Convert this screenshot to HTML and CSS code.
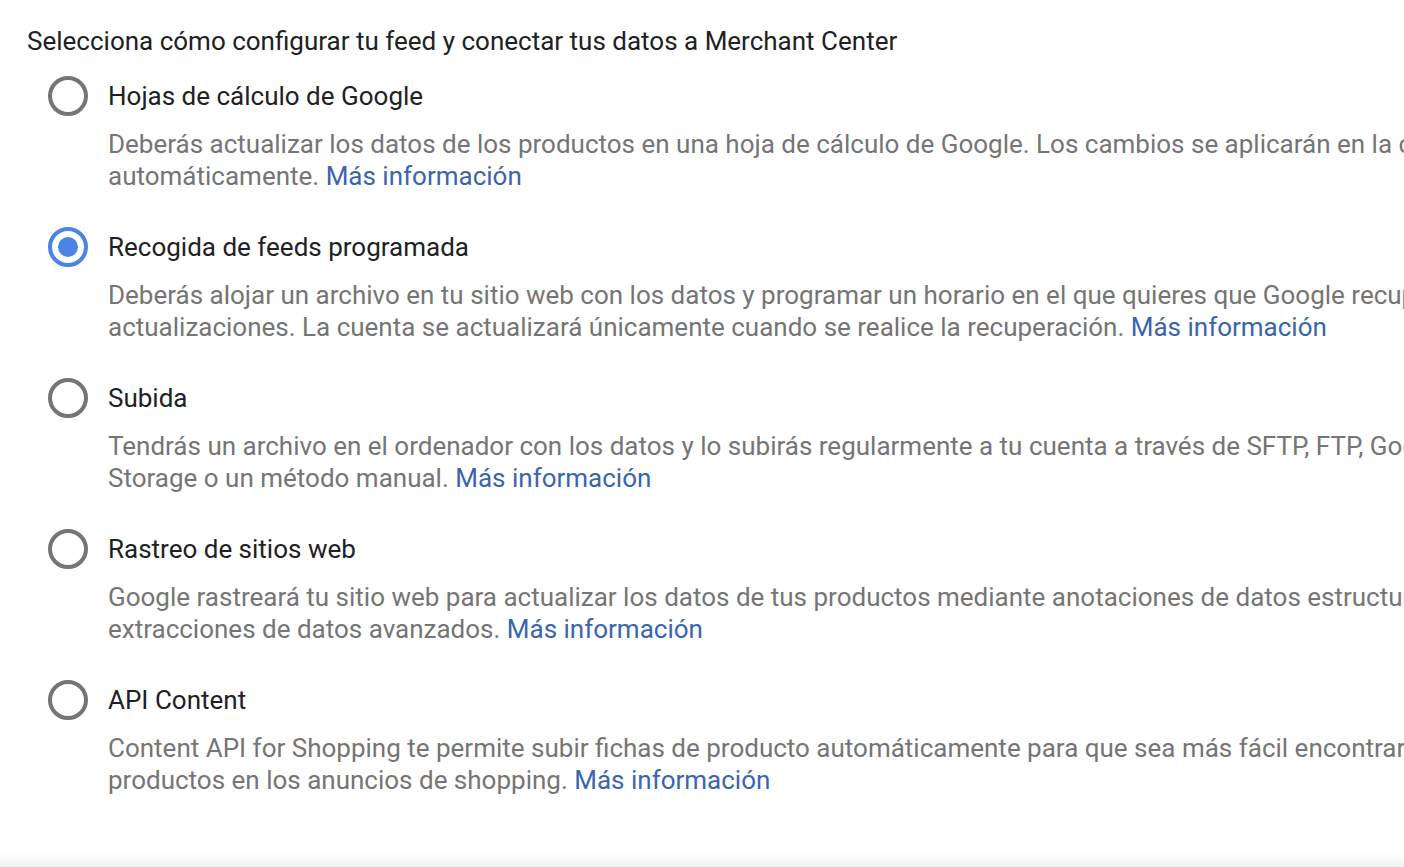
FILE: index.html
```html
<!DOCTYPE html>
<html lang="es">
<head>
<meta charset="utf-8">
<title>Merchant Center</title>
<link rel="stylesheet" href="styles.css">
</head>
<body>
<div class="page">
  <main class="content">
    <h1 class="title">Selecciona cómo configurar tu feed y conectar tus datos a Merchant Center</h1>
    <div class="options">
      <div class="option">
        <span class="radio"></span>
        <div class="label">Hojas de cálculo de Google</div>
        <p class="desc">Deberás actualizar los datos de los productos en una hoja de cálculo de Google. Los cambios se aplicarán en la cuenta<br>automáticamente. <a href="#" class="link">Más información</a></p>
      </div>
      <div class="option">
        <span class="radio checked"></span>
        <div class="label">Recogida de feeds programada</div>
        <p class="desc">Deberás alojar un archivo en tu sitio web con los datos y programar un horario en el que quieres que Google recupere las<br>actualizaciones. La cuenta se actualizará únicamente cuando se realice la recuperación. <a href="#" class="link">Más información</a></p>
      </div>
      <div class="option">
        <span class="radio"></span>
        <div class="label">Subida</div>
        <p class="desc">Tendrás un archivo en el ordenador con los datos y lo subirás regularmente a tu cuenta a través de SFTP, FTP, Google Cloud<br>Storage o un método manual. <a href="#" class="link">Más información</a></p>
      </div>
      <div class="option">
        <span class="radio"></span>
        <div class="label">Rastreo de sitios web</div>
        <p class="desc">Google rastreará tu sitio web para actualizar los datos de tus productos mediante anotaciones de datos estructurados y<br>extracciones de datos avanzados. <a href="#" class="link">Más información</a></p>
      </div>
      <div class="option">
        <span class="radio"></span>
        <div class="label">API Content</div>
        <p class="desc">Content API for Shopping te permite subir fichas de producto automáticamente para que sea más fácil encontrar tus<br>productos en los anuncios de shopping. <a href="#" class="link">Más información</a></p>
      </div>
    </div>
  </main>
  <footer class="footer"></footer>
</div>
</body>
</html>
```
FILE: styles.css
```css
html, body {
  margin: 0;
  padding: 0;
  background: #ffffff;
  overflow: hidden;
}
body {
  font-family: Roboto, "Liberation Sans", Arial, sans-serif;
  font-size: 26px;
  color: #202124;
}
.page {
  width: 1404px;
  height: 867px;
  display: flex;
  flex-direction: column;
  overflow: hidden;
}
.content {
  flex: 1;
  padding: 25px 0 0 27px;
  overflow: hidden;
}
.title {
  margin: 0;
  font-size: 26px;
  font-weight: 400;
  line-height: 32px;
  white-space: nowrap;
  color: #202124;
}
.options {
  margin-top: 19px;
  padding-left: 21px;
  display: flex;
  flex-direction: column;
  gap: 35px;
}
.option {
  display: grid;
  grid-template-columns: 40px auto;
  column-gap: 20px;
  align-items: center;
}
.radio {
  box-sizing: border-box;
  width: 40px;
  height: 40px;
  border: 4px solid #757575;
  border-radius: 50%;
  display: flex;
  align-items: center;
  justify-content: center;
}
.radio.checked {
  border-color: #4a84e4;
}
.radio.checked::after {
  content: "";
  width: 20px;
  height: 20px;
  border-radius: 50%;
  background: #4a84e4;
}
.label {
  line-height: 32px;
  white-space: nowrap;
  color: #202124;
}
.desc {
  grid-column: 2;
  margin: 12px 0 0;
  line-height: 32px;
  white-space: nowrap;
  color: #757575;
}
.link {
  color: #3b64b0;
  text-decoration: none;
}
.footer {
  height: 14px;
  background: linear-gradient(to bottom, #ffffff, #f2f2f2);
}
```
